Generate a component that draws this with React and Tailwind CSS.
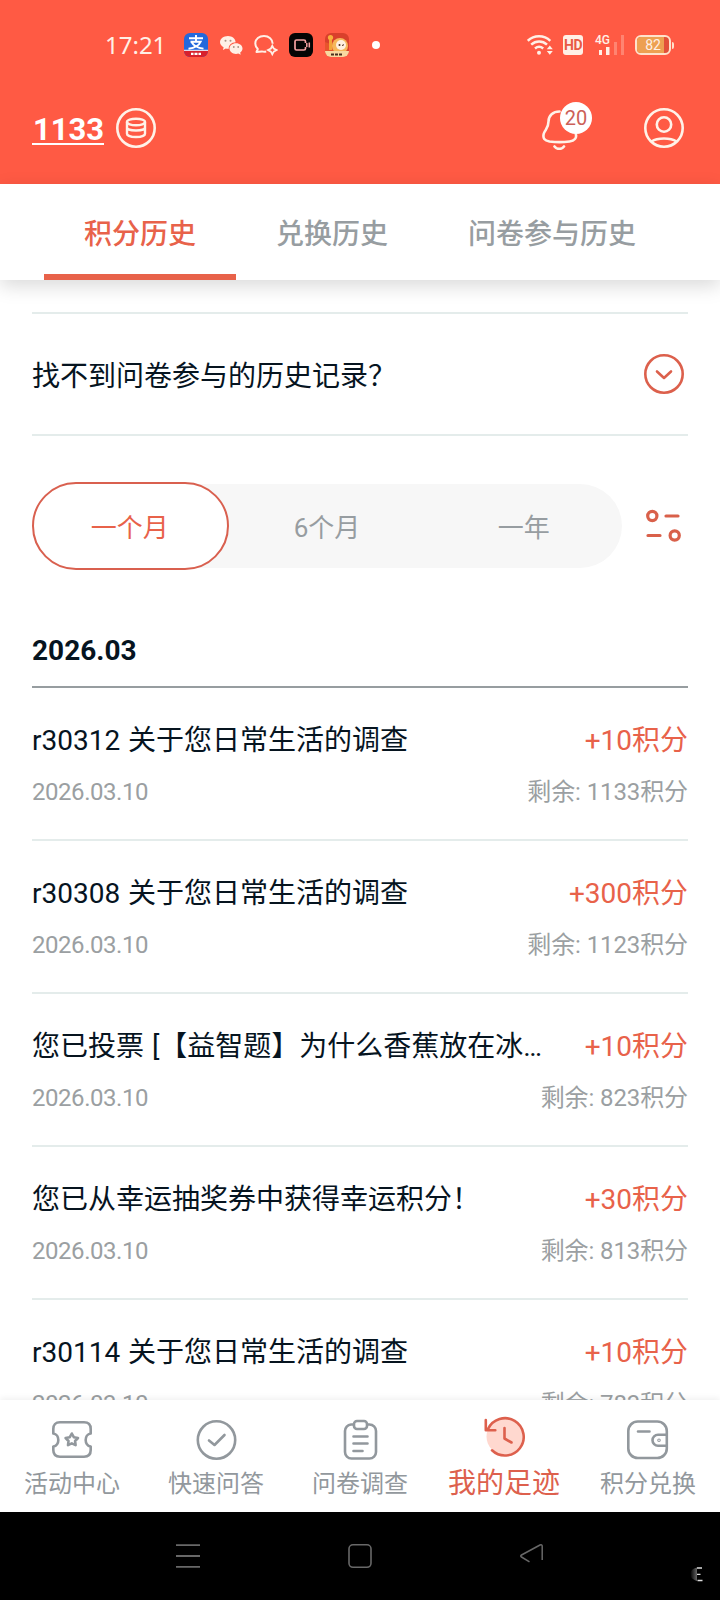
import React from "react";
import clsx from "clsx";

const records = [
  { title: "r30312 关于您日常生活的调查", date: "2026.03.10", points: "+10积分", rest: "剩余: 1133积分" },
  { title: "r30308 关于您日常生活的调查", date: "2026.03.10", points: "+300积分", rest: "剩余: 1123积分" },
  { title: "您已投票 [【益智题】为什么香蕉放在冰…", date: "2026.03.10", points: "+10积分", rest: "剩余: 823积分" },
  { title: "您已从幸运抽奖券中获得幸运积分！", date: "2026.03.10", points: "+30积分", rest: "剩余: 813积分" },
  { title: "r30114 关于您日常生活的调查", date: "2026.03.10", points: "+10积分", rest: "剩余: 783积分" },
];

const tabs = ["积分历史", "兑换历史", "问卷参与历史"];
const periods = ["一个月", "6个月", "一年"];

function StatusBar() {
  return (
    <div className="flex h-[90px] items-center text-[#fff0e6]">
      <span className="ml-[105px] w-[79px] font-['Noto_Sans'] text-[24px] leading-none">17:21</span>
      {/* alipay */}
      <svg width="24" height="24" viewBox="0 0 24 24">
        <defs>
          <clipPath id="pay"><rect width="24" height="24" rx="6" /></clipPath>
        </defs>
        <g clipPath="url(#pay)">
          <rect width="24" height="24" fill="#2468dc" />
          <rect y="17.6" width="24" height="7" fill="#d8202c" />
          <path d="M0 17.3h24" stroke="#fff" strokeWidth="1" />
        </g>
        <g fill="none" stroke="#fff" strokeWidth="1.9">
          <path d="M5 5.300h14M12 2v6.500M6.500 8.700h10.200C15 12.600 11 15 4.500 15.800M7.500 9c2 3.600 6 6 12 6.600" />
        </g>
        <path d="M7 20.800h2.500m1 0h3m1 0H17" stroke="#fff" strokeWidth="2.200" />
      </svg>
      {/* wechat */}
      <svg className="ml-3" width="24" height="24" viewBox="0 0 24 24" fill="#fff0e6">
        <path d="M8 3c4.300 0 7.500 2.800 7.600 6.200-4.200.2-7.200 3-6.800 6.500-1 .2-2 .1-3-.1L3 17l.6-2.700C1.500 13 0 11.200 0 9.200 0 5.800 3.500 3 8 3z" />
        <path d="M16 10.200c3.700 0 6.500 2.400 6.500 5.300 0 1.700-.9 3.100-2.300 4.100l.5 2.200-2.400-1.200c-.7.200-1.500.3-2.300.3-3.700 0-6.500-2.400-6.500-5.400s2.800-5.300 6.500-5.300z" />
        <g fill="#a89484">
          <circle cx="5.500" cy="7.700" r="1" /><circle cx="10.500" cy="7.700" r="1" />
          <circle cx="13.800" cy="14" r=".9" /><circle cx="18.200" cy="14" r=".9" />
        </g>
      </svg>
      {/* chat with sparkle */}
      <svg className="ml-[10px]" width="24" height="24" viewBox="0 0 24 24" fill="none" stroke="#fff0e6" strokeWidth="2">
        <path d="M12.200 18.500c-1.400.4-3 .3-4.400-.1L2.500 19l1.300-3C2.300 14.500 1.300 12.500 1.300 10.400 1.300 6 5.200 3 10 3s8.700 3.300 8.700 7.700" strokeLinejoin="round" />
        <path d="M18.300 12.800l1.400 2.700 2.900 1.500-2.900 1.600-1.400 2.700-1.400-2.700-2.900-1.600 2.900-1.500z" strokeWidth="1.800" />
      </svg>
      {/* recorder */}
      <svg className="ml-[11px]" width="24" height="24" viewBox="0 0 24 24">
        <rect width="24" height="24" rx="6" fill="#050505" />
        <path d="M16.500 14v1.500A1.500 1.500 0 0 1 15 17H7.500A1.500 1.500 0 0 1 6 15.500v-7A1.500 1.500 0 0 1 7.500 7H15a1.500 1.500 0 0 1 1.500 1.500V10" fill="none" stroke="#f6a2a2" strokeWidth="1.700" />
        <path d="M17.800 10v4M20.300 9.500v5" stroke="#f6a2a2" strokeWidth="1.500" />
      </svg>
      {/* game */}
      <svg className="ml-3" width="24" height="24" viewBox="0 0 24 24">
        <defs>
          <clipPath id="game"><rect width="24" height="24" rx="6" /></clipPath>
        </defs>
        <g clipPath="url(#game)">
          <rect width="24" height="24" fill="#d9402c" />
          <path d="M0 9l8 3 4 8H0z" fill="#e8542c" />
          <circle cx="15" cy="13" r="8" fill="#f6b65a" />
          <circle cx="16" cy="12" r="5" fill="#fff0e0" />
          <path d="M4 7h3v10H4z" fill="#f3a43a" />
          <circle cx="5.500" cy="4.500" r="2.600" fill="#f9b03c" />
          <circle cx="14.500" cy="12" r="1" fill="#4a2a20" />
          <path d="M17 12.500l2-.8" stroke="#4a2a20" strokeWidth="1" />
          <rect y="18" width="24" height="6" fill="#f8d9a0" />
          <path d="M6 21.500h3m1 0h3m1 0h3" stroke="#4a3020" strokeWidth="2.200" />
        </g>
      </svg>
      <span className="ml-[23px] size-2 rounded-full bg-white" />
      <div className="mr-[46px] ml-auto flex items-center">
        {/* wifi */}
        <svg width="26" height="20" viewBox="0 0 26 20" fill="none" stroke="#fff0e6" strokeWidth="2.500">
          <path d="M.8 5.800C7-.2 17-.2 23.300 5.800M4.200 9.700c4.600-4.200 11.200-4.200 15.800 0M8 13.500c2.600-2.200 5.600-2.200 8.200 0" />
          <circle cx="12" cy="17.800" r="2" fill="#fff0e6" stroke="none" />
          <path d="M19.800 14.200l3-3.700 3 3.700zM19.800 16l3 3.700 3-3.700z" fill="#fff0e6" stroke="none" />
        </svg>
        <span className="ml-[10px] flex h-5 w-5 items-center justify-center rounded-[3px] bg-[#fff0e6] font-['Roboto'] text-[14px] leading-none font-bold tracking-[-0.6px] text-[#e85a44]">
          HD
        </span>
        {/* signal */}
        <div className="relative ml-[12px] h-5 w-[31px]">
          <span className="absolute -top-px left-0 font-['Roboto'] text-[12px] leading-none font-medium">4G</span>
          <svg className="absolute inset-0" width="31" height="20" viewBox="0 0 31 20" fill="#fff0e6">
            <path d="M4 15h3v5H4zM11 12h3.500v8H11z" />
            <path d="M19 7h3v13h-3zM26 0h3v20h-3z" opacity=".28" />
          </svg>
        </div>
        {/* battery */}
        <div className="ml-[9px] flex items-center">
          <div className="relative flex h-5 w-9 items-center justify-center overflow-hidden rounded-md border-2 border-[#ffe2cc] bg-[#e2503a]">
            <span className="absolute inset-y-0 left-0 w-[27px] bg-[#eda052]" />
            <span className="relative font-['Roboto'] text-[14px] leading-none">82</span>
          </div>
          <span className="ml-px h-[7px] w-[2px] rounded-r bg-[#ffe2cc]" />
        </div>
      </div>
    </div>
  );
}

function Header() {
  return (
    <header className="h-[184px] bg-[#ff5a44]">
      <StatusBar />
      <div className="flex h-[76px] items-center pr-9 pl-8 text-[#fff2e8]">
        <span className="mt-[3px] w-[72px] border-b-2 border-white pt-px pl-px text-[31px] leading-[27px] font-bold text-white">1133</span>
        <svg className="ml-3" width="40" height="40" viewBox="0 0 40 40" fill="none" stroke="currentColor">
          <circle cx="20" cy="20" r="18.700" strokeWidth="2.600" />
          <g strokeWidth="2.400">
            <ellipse cx="20" cy="14" rx="9" ry="3.200" />
            <path d="M11 14v11.800c0 1.800 4 3.200 9 3.200s9-1.400 9-3.200V14M11 19.500c0 1.800 4 3 9 3s9-1.200 9-3" />
          </g>
        </svg>
        <div className="relative -mt-1 mr-[52px] ml-auto h-12 w-[50px]">
          <svg width="50" height="48" viewBox="0 0 50 48" fill="none" stroke="currentColor" strokeWidth="2.600" strokeLinecap="round">
            <path d="M17.500 9.500C11 9.500 6.500 13.500 6.500 19.500c0 7-3.500 8-4.700 12C.5 36.500 2.500 38.500 7.500 39.500c6 .8 14 .8 20 0 5-.7 7.500-3.500 6.300-7.500" />
            <path d="M12.500 44.500c2.500 3.200 7 3.200 9.500 0" />
          </svg>
          <span className="absolute top-0 left-[18px] flex size-8 items-center justify-center rounded-full bg-white text-[20px] leading-none text-[#cc5f58]">
            20
          </span>
        </div>
        <svg width="40" height="40" viewBox="0 0 40 40" fill="none" stroke="currentColor" strokeWidth="2.600">
          <circle cx="20" cy="20" r="18.700" />
          <circle cx="20" cy="16.500" r="7.200" />
          <path d="M7.500 33.500c6-4 19-4 25 0" />
        </svg>
      </div>
    </header>
  );
}

function Tabs() {
  return (
    <nav className="relative z-10 flex h-24 justify-center bg-white shadow-[0_6px_18px_rgba(0,0,0,0.15)]">
      {tabs.map((tab, i) => (
        <button
          key={tab}
          className={clsx(
            "border-b-[6px] px-10 pt-[11px] text-[28px] leading-none font-medium",
            i === 0 ? "border-[#e8624a] text-[#e8624a]" : "border-transparent text-[#979da1]"
          )}
        >
          {tab}
        </button>
      ))}
    </nav>
  );
}

function PeriodFilter() {
  return (
    <div className="mt-12 flex h-[84px] items-center">
      <div className="grid h-[84px] w-[590px] grid-cols-3 content-center rounded-full bg-[#f7f7f7] text-[26px] leading-none">
        {periods.map((period, i) => (
          <button
            key={period}
            className={clsx(
              "flex h-[88px] items-center justify-center rounded-full pt-[4px]",
              i === 0 ? "border-2 border-[#d9604f] bg-white pr-px text-[#e8624a]" : "text-[#979da1]"
            )}
          >
            {period}
          </button>
        ))}
      </div>
      <svg className="ml-6" width="36" height="36" viewBox="0 0 36 36" fill="none" stroke="#d9604a" strokeWidth="3.200" strokeLinecap="round">
        <circle cx="6.300" cy="8" r="4.600" />
        <path d="M20 8h12M2 27.500h12" />
        <circle cx="28.700" cy="27.500" r="4.600" />
      </svg>
    </div>
  );
}

function Record({ title, date, points, rest }) {
  return (
    <li className="h-[153px] border-b-2 border-[#e4eceb] pt-[35px]">
      <div className="flex justify-between text-[28px] leading-9">
        <p className="whitespace-nowrap text-[#06141f] [word-spacing:1px]">{title}</p>
        <span className="text-[#e8624a]">{points}</span>
      </div>
      <div className="mt-[17px] flex justify-between text-[24px] leading-8 text-[#9b9fa2]">
        <span className="tracking-[-0.45px]">{date}</span>
        <span className="tracking-[-0.1px]">{rest}</span>
      </div>
    </li>
  );
}

const iconProps = {
  width: 42,
  height: 42,
  viewBox: "0 0 42 42",
  fill: "none",
  stroke: "currentColor",
  strokeWidth: 2.6,
  strokeLinecap: "round",
  strokeLinejoin: "round",
};

const menu = [
  {
    label: "活动中心",
    icon: (
      <svg {...iconProps}>
        <path d="M9 3.300h24c4.500 0 6.700 2.500 6.700 6.700v4.500c-6.700 1-6.700 12 0 13V31c0 4.500-2.200 6.700-6.700 6.700H9c-4.500 0-6.700-2.200-6.700-6.700v-3.500c6.700-1 6.700-12 0-13V10c0-4.200 2.200-6.700 6.700-6.700z" />
        <path d="M20.800 14.500l2 3.700 4.200.8-2.900 3 .5 4.200-3.800-1.800-3.800 1.800.5-4.200-2.900-3 4.200-.8z" />
      </svg>
    ),
  },
  {
    label: "快速问答",
    icon: (
      <svg {...iconProps}>
        <circle cx="21.500" cy="21" r="18.700" />
        <path d="M14 21.500l5.500 4.500L29.500 16" />
      </svg>
    ),
  },
  {
    label: "问卷调查",
    icon: (
      <svg {...iconProps}>
        <path d="M14.500 5.500H12A6.500 6.500 0 0 0 6 12v21a6.500 6.500 0 0 0 6.500 6.500h18A6.500 6.500 0 0 0 37 33V12a6.500 6.500 0 0 0-6.500-6.500h-2" />
        <rect x="15" y="2" width="13" height="8" rx="3" />
        <path d="M14.500 17.500h14M14.500 24.500h14M14.500 32h9" />
      </svg>
    ),
  },
  {
    label: "我的足迹",
    active: true,
    icon: (
      <svg {...iconProps}>
        <circle cx="21.500" cy="20.500" r="18" fill="#ffd8cf" stroke="none" />
        <path d="M5 13A18.700 18.700 0 1 1 9 34.300M2.800 4v10.200h9.500M21.500 12v10.500l7 4" />
      </svg>
    ),
  },
  {
    label: "积分兑换",
    icon: (
      <svg {...iconProps}>
        <rect x="1.300" y="2.500" width="38.500" height="36.500" rx="9.500" />
        <path d="M11 12.500h11.500M39.500 15.800H31a5.500 5.500 0 0 0 0 11h8.500" />
        <circle cx="32" cy="21.300" r=".5" />
      </svg>
    ),
  },
];

function BottomMenu() {
  return (
    <nav className="relative z-10 grid h-28 grid-cols-5 bg-white shadow-[0_-2px_6px_rgba(0,0,0,0.06)]">
      {menu.map(({ label, active, icon }) => (
        <div
          key={label}
          className={clsx(
            "flex flex-col items-center whitespace-nowrap",
            active ? "gap-3 pt-4 text-[28px] text-[#dd604d]" : "gap-[11px] pt-[19px] text-[24px] text-[#92989d]"
          )}
        >
          {icon}
          <span className="leading-none">{label}</span>
        </div>
      ))}
    </nav>
  );
}

function SystemBar() {
  return (
    <div className="flex h-[88px] items-center bg-black pb-px pl-[175px] text-[#686868]">
      <svg width="26" height="26" viewBox="0 0 26 26" stroke="currentColor" strokeWidth="1.800">
        <path d="M1 2.200h24M1 13h24M1 23.900h24" />
      </svg>
      <svg className="ml-[146px]" width="26" height="26" viewBox="0 0 26 26" fill="none" stroke="currentColor" strokeWidth="1.600">
        <rect x="2" y="1.800" width="22" height="22.500" rx="4" />
      </svg>
      <svg className="ml-[146px]" width="26" height="26" viewBox="0 0 26 26" fill="none" stroke="currentColor" strokeWidth="1.500" strokeLinejoin="round">
        <path d="M10.500 18.800L2.500 14c-1-.6-1-1.400 0-2L21 2c1.300-.6 2.200 0 2.200 1.300V17" />
      </svg>
      <svg className="mt-9 ml-[144px]" width="16" height="18" viewBox="0 0 16 18">
        <defs>
          <linearGradient id="edge">
            <stop offset="0" stopColor="#000" />
            <stop offset="1" stopColor="#666" />
          </linearGradient>
        </defs>
        <path d="M8 2.500C-1 4-1 14 8 16z" fill="url(#edge)" />
        <path d="M8 3h5M8 9.300h3.500M8.500 15.500h5" stroke="#ddd" strokeWidth="1.300" />
      </svg>
    </div>
  );
}

export default function App() {
  return (
    <div className="flex h-[1600px] w-[720px] flex-col overflow-hidden bg-white font-[Roboto,'Noto_Sans_CJK_SC',sans-serif] [text-spacing-trim:space-all]">
      <Header />
      <Tabs />
      <main className="min-h-0 flex-1 overflow-hidden px-8 pt-8">
        <div className="flex h-[124px] items-center justify-between border-y-2 border-[#e4eceb] pr-1">
          <p className="pt-[6px] text-[28px] leading-none text-[#06141f]">找不到问卷参与的历史记录？</p>
          <svg width="40" height="40" viewBox="0 0 40 40" fill="none" stroke="#dc604c" strokeWidth="2.600" strokeLinecap="round" strokeLinejoin="round">
            <circle cx="20" cy="20" r="18.700" />
            <path d="M13 17.500l7 6.500 7-6.500" />
          </svg>
        </div>
        <PeriodFilter />
        <h2 className="mt-[65px] h-[55px] border-b-2 border-[#979da0] text-[28px] leading-9 font-bold text-[#06141f]">2026.03</h2>
        <ul>
          {records.map((record) => (
            <Record key={record.title} {...record} />
          ))}
        </ul>
      </main>
      <BottomMenu />
      <SystemBar />
    </div>
  );
}
